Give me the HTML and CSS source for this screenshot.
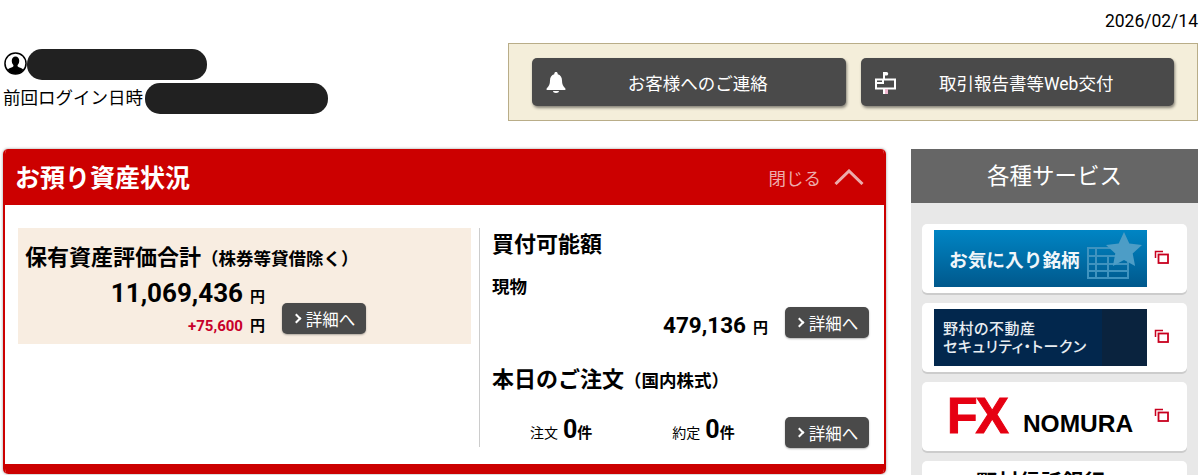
FILE: index.html
```html
<!DOCTYPE html>
<html lang="ja">
<head>
    <meta charset="UTF-8">
    <title>お預り資産状況</title>
    <link rel="stylesheet" href="styles.css">
</head>
<body>
    <div class="date">2026/02/14</div>

    <div class="top-row">
        <div class="user-info">
            <div class="user-line">
                <svg class="user-icon" viewBox="0 0 24 24" width="23" height="23">
                    <circle cx="12" cy="12" r="11" fill="#fff" stroke="#000" stroke-width="1.6"/>
                    <path d="M3.6 18.5c2-2.4 5-2.3 6-3.4.5-.6.3-1.400-.2-2-.8-1-1.300-2.400-1.300-4 0-2.600 1.600-4.300 3.900-4.300s3.900 1.700 3.900 4.300c0 1.600-.5 3-1.300 4-.5.6-.7 1.400-.2 2 1 1.100 4 1 6 3.400A11 11 0 0 1 12 23a11 11 0 0 1-8.400-4.500z" fill="#000"/>
                </svg>
                <span class="mask mask-name"></span>
            </div>
            <div class="user-line login-line">
                <span class="login-label">前回ログイン日時</span>
                <span class="mask mask-login"></span>
            </div>
        </div>

        <div class="notice-box">
            <a class="notice-btn">
                <svg class="notice-icon" viewBox="0 0 20 21" width="20" height="21">
                    <path d="M10 0c1 0 1.700.7 1.700 1.700v.6c2.800.8 4.300 3.100 4.300 6.200 0 3.800 1 5.700 3.400 8V18H.6v-1.500c2.400-2.300 3.400-4.200 3.400-8 0-3.100 1.500-5.400 4.300-6.200v-.6C8.300.7 9 0 10 0z" fill="#fff"/>
                    <path d="M7 19h6c0 1.100-1.300 2-3 2s-3-.9-3-2z" fill="#fff"/>
                </svg>
                <span>お客様へのご連絡</span>
            </a>
            <a class="notice-btn">
                <svg class="notice-icon" viewBox="0 0 21 22" width="21" height="22">
                    <path d="M8 0h3.500c1 0 1.700.8 1.700 1.800s-.7 1.800-1.700 1.800H10V7H8z" fill="#fff"/>
                    <path d="M1 7.500h19v9H1zM1 11h7V7.500" fill="none" stroke="#fff" stroke-width="2"/>
                    <path d="M8 17h2v5H8z" fill="#fff"/>
                    <path d="M10 17h3v5h-3z" fill="#f0b8d0"/>
                </svg>
                <span>取引報告書等Web交付</span>
            </a>
        </div>
    </div>

    <div class="main-row">
        <section class="asset-panel">
            <div class="panel-head">
                <h2>お預り資産状況</h2>
                <div class="panel-close">
                    <span>閉じる</span>
                    <svg viewBox="0 0 30 16" width="30" height="16">
                        <path d="M1.500 15L15 2l13.500 13" fill="none" stroke="#ecabab" stroke-width="3"/>
                    </svg>
                </div>
            </div>

            <div class="panel-body">
                <div class="holdings">
                    <h3 class="holdings-title">保有資産評価合計<small>（株券等貸借除く）</small></h3>
                    <div class="holdings-row">
                        <div class="holdings-amounts">
                            <div class="amount-main">11,069,436<span class="yen">円</span></div>
                            <div class="amount-diff"><span class="plus">+75,600</span><span class="yen">円</span></div>
                        </div>
                        <a class="detail-btn"><i class="chev"></i>詳細へ</a>
                    </div>
                </div>

                <div class="side-info">
                    <h3 class="info-title">買付可能額</h3>
                    <div class="cash-label">現物</div>
                    <div class="cash-row">
                        <div class="amount-cash">479,136<span class="yen">円</span></div>
                        <a class="detail-btn"><i class="chev"></i>詳細へ</a>
                    </div>
                    <h3 class="info-title order-title">本日のご注文<small>（国内株式）</small></h3>
                    <div class="order-row">
                        <div class="order-item order-first">注文<b>0</b><em>件</em></div>
                        <div class="order-item order-second">約定<b>0</b><em>件</em></div>
                        <a class="detail-btn"><i class="chev"></i>詳細へ</a>
                    </div>
                </div>
            </div>

            <div class="panel-foot"></div>
        </section>

        <aside class="services">
            <h2 class="services-head">各種サービス</h2>
            <div class="services-list">
                <a class="service-card">
                    <div class="banner banner-fav">
                        <span>お気に入り銘柄</span>
                        <svg class="fav-art" viewBox="0 0 62 48" width="62" height="48">
                            <path d="M3 16h40v30H3zM3 24h40M3 32h40M3 39h40M11 16v30M23 24v22" fill="none" stroke="#3f93bf" stroke-width="2"/>
                            <path d="M39 0l5.300 11.500 12.700 1.500-9.300 8.500 2.400 12.500L39 28l-11.100 6 2.400-12.500-9.300-8.500 12.700-1.500z" fill="#4d9dc6"/>
                        </svg>
                    </div>
                    <svg class="copy-icon" viewBox="0 0 15 14" width="15" height="14"><path d="M9 1.500H1.500V8" fill="none" stroke="#c8001e" stroke-width="1.500"/><rect x="4.500" y="4.500" width="9.500" height="8.500" fill="none" stroke="#c8001e" stroke-width="1.800"/></svg>
                </a>
                <a class="service-card">
                    <div class="banner banner-token">
                        <span>野村の不動産<br>セキュリティ・トークン</span>
                    </div>
                    <svg class="copy-icon" viewBox="0 0 15 14" width="15" height="14"><path d="M9 1.500H1.500V8" fill="none" stroke="#c8001e" stroke-width="1.500"/><rect x="4.500" y="4.500" width="9.500" height="8.500" fill="none" stroke="#c8001e" stroke-width="1.800"/></svg>
                </a>
                <a class="service-card">
                    <div class="banner banner-fx">
                        <span class="fx-mark">FX</span>
                        <span class="fx-name">NOMURA</span>
                    </div>
                    <svg class="copy-icon" viewBox="0 0 15 14" width="15" height="14"><path d="M9 1.500H1.500V8" fill="none" stroke="#c8001e" stroke-width="1.500"/><rect x="4.500" y="4.500" width="9.500" height="8.500" fill="none" stroke="#c8001e" stroke-width="1.800"/></svg>
                </a>
                <a class="service-card card-trust">
                    <div class="banner banner-trust">野村信託銀行</div>
                </a>
            </div>
        </aside>
    </div>
</body>
</html>
```

FILE: styles.css
```css
html, body {
    height: 475px;
    overflow: hidden;
}

body {
    margin: 0;
    padding: 0 3px;
    background: #fff;
    color: #000;
    font-family: Roboto, "Noto Sans CJK JP", sans-serif;
}

h2, h3 {
    margin: 0;
}

small {
    font-size: 17.5px;
}

.date {
    height: 43px;
    padding-top: 11px;
    box-sizing: border-box;
    text-align: right;
    font-size: 17.5px;
    line-height: 20px;
}

.top-row {
    display: flex;
    justify-content: space-between;
}

.user-info {
    padding-top: 6px;
}

.user-line {
    display: flex;
    align-items: center;
    height: 31px;
}

.user-icon {
    flex: none;
    margin: 0 0 3px 1px;
}

.login-line {
    margin-top: 3px;
    font-size: 17.5px;
}

.login-label {
    padding-bottom: 5px;
}

.mask {
    display: block;
    height: 31px;
    background: #212121;
    border-radius: 15px;
}

.mask-name {
    width: 180px;
}

.mask-login {
    width: 183px;
    margin-left: 2px;
}

.notice-box {
    display: flex;
    gap: 15px;
    width: 690px;
    height: 78px;
    box-sizing: border-box;
    padding: 14px 23px;
    background: #f4eeda;
    border: 1px solid #b9ad88;
}

.notice-btn {
    position: relative;
    display: flex;
    flex: 1;
    align-items: center;
    justify-content: center;
    height: 48px;
    padding-left: 18px;
    background: #4a4a4a;
    border-radius: 5px;
    box-shadow: 1px 2px 3px rgba(0, 0, 0, 0.45);
    color: #fff;
    font-size: 17.5px;
}

.notice-icon {
    position: absolute;
    left: 14px;
    top: 14px;
}

.main-row {
    display: flex;
    justify-content: space-between;
    margin-top: 28px;
}

.asset-panel {
    width: 883px;
    height: 325px;
    display: flex;
    flex-direction: column;
    box-sizing: border-box;
    border: solid #cc0000;
    border-width: 0 2px;
    border-radius: 5px;
    box-shadow: 0 0 3px rgba(0, 0, 0, 0.4);
    overflow: hidden;
}

.panel-head {
    display: flex;
    justify-content: space-between;
    align-items: center;
    height: 56px;
    flex: none;
    box-sizing: border-box;
    padding: 0 20px 0 10px;
    background: #cc0000;
    color: #fff;
}

.panel-head h2 {
    padding-bottom: 3px;
    font-size: 25px;
    font-weight: 700;
}

.panel-close {
    display: flex;
    align-items: center;
    gap: 13px;
    color: #ecabab;
    font-size: 17.5px;
}

.panel-body {
    display: flex;
    flex: 1;
    min-height: 0;
    padding: 23px 15px 17px 13px;
}

.panel-foot {
    height: 10px;
    flex: none;
    background: #cc0000;
}

.holdings {
    width: 453px;
    height: 116px;
    box-sizing: border-box;
    padding: 16px 7px 0;
    background: #f8ede1;
}

.holdings-title {
    font-size: 22px;
    line-height: 28px;
    font-weight: 700;
}

.holdings-row {
    display: flex;
    align-items: flex-end;
    gap: 17px;
}

.holdings-amounts {
    width: 240px;
    text-align: right;
}

.amount-main {
    padding-top: 2px;
    font-size: 26px;
    font-weight: 700;
    line-height: 36px;
}

.amount-diff {
    font-size: 15px;
    font-weight: 700;
    line-height: 22px;
}

.holdings-row .detail-btn {
    margin-bottom: 3px;
}

.plus {
    color: #c8002a;
}

.yen {
    margin-left: 7px;
    font-size: 15px;
    font-weight: 700;
}

.detail-btn {
    display: flex;
    align-items: center;
    justify-content: center;
    gap: 4px;
    flex: none;
    width: 84px;
    height: 31px;
    box-sizing: border-box;
    background: #4a4a4a;
    border-radius: 5px;
    box-shadow: 0 1px 2px rgba(0, 0, 0, 0.3);
    color: #fff;
    font-size: 16.5px;
}

.chev {
    width: 5px;
    height: 5px;
    margin-right: 2px;
    border: solid #fff;
    border-width: 2.500px 2.500px 0 0;
    transform: rotate(45deg);
}

.side-info {
    flex: 1;
    margin-left: 8px;
    padding-left: 12px;
    border-left: 1px solid #ccc;
}

.info-title {
    padding-top: 1px;
    font-size: 22px;
    line-height: 32px;
    font-weight: 700;
}

.cash-label {
    margin-top: 15px;
    font-size: 17.5px;
    font-weight: 700;
    line-height: 22px;
}

.cash-row {
    display: flex;
    justify-content: flex-end;
    align-items: center;
    gap: 17px;
    margin-top: 9px;
}

.amount-cash {
    padding-top: 4px;
    font-size: 22.5px;
    font-weight: 700;
}

.order-title {
    margin-top: 25px;
}

.order-row {
    display: flex;
    align-items: flex-start;
    margin-top: 20px;
}

.order-item {
    display: flex;
    align-items: baseline;
    margin-top: -3px;
    font-size: 14px;
}

.order-item b {
    margin-left: 5px;
    font-size: 25px;
    line-height: 31px;
}

.order-item em {
    font-size: 15px;
    font-style: normal;
    font-weight: 700;
}

.order-first {
    margin-left: 38px;
}

.order-second {
    margin-left: 80px;
    margin-right: auto;
}

.services {
    width: 287px;
    flex: none;
    background: #e8e8e8;
    height: 330px;
    overflow: hidden;
}

.services-head {
    height: 54px;
    background: #666;
    color: #fff;
    font-size: 22.5px;
    font-weight: 400;
    line-height: 54px;
    text-align: center;
}

.services-list {
    display: flex;
    flex-direction: column;
    gap: 10px;
    padding: 21px 11px 0;
}

.service-card {
    display: flex;
    align-items: center;
    gap: 8px;
    flex: none;
    height: 69px;
    padding: 0 17px 0 12px;
    background: #fff;
    border-radius: 5px;
    box-shadow: 0 2px 0 #ccc;
}

.copy-icon {
    margin: -3px 0 0 -1px;
}

.banner {
    display: flex;
    align-items: center;
    position: relative;
    width: 213px;
    height: 57px;
    flex: none;
    overflow: hidden;
}

.banner-fav {
    padding-left: 15px;
    box-sizing: border-box;
    background: linear-gradient(#0085c4, #00588c);
    color: #f0f6fa;
    font-size: 18.7px;
    font-weight: 700;
}

.fav-art {
    position: absolute;
    right: 0;
    top: 2px;
}

.banner-token {
    padding-left: 9px;
    box-sizing: border-box;
    background: linear-gradient(90deg, #02274d 79%, #0a233e 79%);
    color: #e8edf2;
    font-size: 15px;
    font-weight: 500;
    font-feature-settings: "palt";
    letter-spacing: 0.5px;
    line-height: 18px;
}

.banner-fx {
    align-items: flex-end;
    padding: 0 0 14px 13px;
    box-sizing: border-box;
    height: 66px;
}

.fx-mark {
    color: #e60012;
    font-family: "Liberation Sans", sans-serif;
    font-size: 50px;
    font-weight: 700;
    line-height: 40px;
    letter-spacing: -2px;
    -webkit-text-stroke: 1px #e60012;
}

.fx-name {
    margin-left: 16px;
    font-family: "Liberation Sans", sans-serif;
    font-size: 24.5px;
    font-weight: 700;
    line-height: 24px;
}

.card-trust {
    align-items: flex-start;
}

.banner-trust {
    justify-content: center;
    align-items: flex-start;
    padding-top: 10px;
    box-sizing: border-box;
    font-size: 21.5px;
    font-weight: 700;
    line-height: 24px;
}
```
